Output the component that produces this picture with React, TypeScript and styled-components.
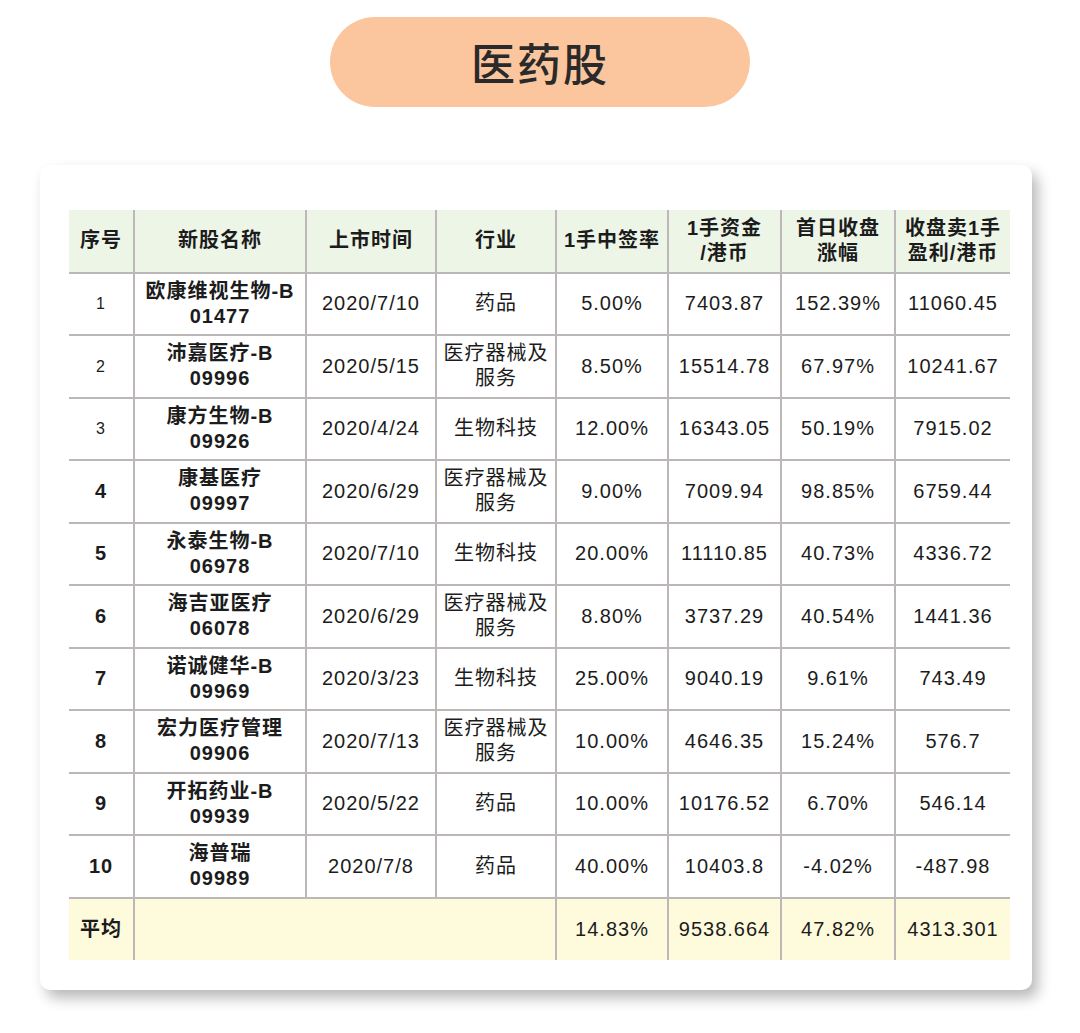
import React from "react"
import styled, { createGlobalStyle } from "styled-components"

const GlobalStyle = createGlobalStyle`
  html, body {
    margin: 0;
    padding: 0;
    background: #ffffff;
  }
  body {
    font-family: "Liberation Sans", "Noto Sans CJK SC", sans-serif;
    color: #1c1c1c;
  }
`

const Page = styled.div`
  width: 1080px;
  height: 1033px;
  padding-top: 17px;
  box-sizing: border-box;
`

const TitlePill = styled.div`
  width: 420px;
  height: 90px;
  margin: 0 auto;
  border-radius: 45px;
  background: #fbc69e;
  display: flex;
  align-items: center;
  justify-content: center;
  font-family: "Noto Sans CJK SC", sans-serif;
  font-size: 44px;
  font-weight: 500;
  letter-spacing: 2px;
  color: #2a2a2a;
`

const Card = styled.div`
  width: 992px;
  margin: 58px 0 0 40px;
  box-sizing: border-box;
  padding: 45px 22px 30px 29px;
  background: #ffffff;
  border-radius: 10px;
  box-shadow: 6px 8px 14px rgba(0, 0, 0, 0.28);
`

const Table = styled.table`
  width: 941px;
  table-layout: fixed;
  border-collapse: collapse;
  font-size: 20px;
`

const Row = styled.tr<{ $tone?: "head" | "avg" }>`
  height: 62.5px;
  background: ${({ $tone }) => ($tone === "head" ? "#edf5e7" : $tone === "avg" ? "#fefadc" : "#ffffff")};
`

const Cell = styled.td<{ $bold?: boolean; $small?: boolean }>`
  padding: 0;
  text-align: center;
  vertical-align: middle;
  line-height: 25px;
  letter-spacing: 1px;
  font-weight: ${({ $bold }) => ($bold ? 700 : 400)};
  font-size: ${({ $small }) => ($small ? "16px" : "20px")};
  border-right: 2px solid #bcb8b8;
  border-bottom: 2px solid #bcb8b8;
  white-space: nowrap;

  &:last-child {
    border-right: none;
  }
  tr:last-child > & {
    border-bottom: none;
  }
`

const HeadCell = styled(Cell).attrs({ as: "th" })`
  font-weight: 700;
  font-size: 20px;
`

const cols = [65, 172, 130, 120, 112, 113, 114, 115]

const headers = ["序号", "新股名称", "上市时间", "行业", "1手中签率", ["1手资金", "/港币"], ["首日收盘", "涨幅"], ["收盘卖1手", "盈利/港币"]]

const rows: [string, string, string, string, string, string, string, string, string][] = [
  ["1", "欧康维视生物-B", "01477", "2020/7/10", "药品", "5.00%", "7403.87", "152.39%", "11060.45"],
  ["2", "沛嘉医疗-B", "09996", "2020/5/15", "医疗器械及服务", "8.50%", "15514.78", "67.97%", "10241.67"],
  ["3", "康方生物-B", "09926", "2020/4/24", "生物科技", "12.00%", "16343.05", "50.19%", "7915.02"],
  ["4", "康基医疗", "09997", "2020/6/29", "医疗器械及服务", "9.00%", "7009.94", "98.85%", "6759.44"],
  ["5", "永泰生物-B", "06978", "2020/7/10", "生物科技", "20.00%", "11110.85", "40.73%", "4336.72"],
  ["6", "海吉亚医疗", "06078", "2020/6/29", "医疗器械及服务", "8.80%", "3737.29", "40.54%", "1441.36"],
  ["7", "诺诚健华-B", "09969", "2020/3/23", "生物科技", "25.00%", "9040.19", "9.61%", "743.49"],
  ["8", "宏力医疗管理", "09906", "2020/7/13", "医疗器械及服务", "10.00%", "4646.35", "15.24%", "576.7"],
  ["9", "开拓药业-B", "09939", "2020/5/22", "药品", "10.00%", "10176.52", "6.70%", "546.14"],
  ["10", "海普瑞", "09989", "2020/7/8", "药品", "40.00%", "10403.8", "-4.02%", "-487.98"],
]

function Industry({ value }: { value: string }) {
  if (value === "医疗器械及服务") {
    return (
      <>
        医疗器械及
        <br />
        服务
      </>
    )
  }
  return <>{value}</>
}

export default function App() {
  return (
    <>
      <GlobalStyle />
      <Page>
        <TitlePill>医药股</TitlePill>
        <Card>
          <Table>
            <colgroup>
              {cols.map((w, i) => (
                <col key={i} style={{ width: w }} />
              ))}
            </colgroup>
            <tbody>
              <Row $tone="head">
                {headers.map((h, i) => (
                  <HeadCell key={i}>
                    {Array.isArray(h) ? (
                      <>
                        {h[0]}
                        <br />
                        {h[1]}
                      </>
                    ) : (
                      h
                    )}
                  </HeadCell>
                ))}
              </Row>
              {rows.map(r => (
                <Row key={r[0]}>
                  <Cell $bold={Number(r[0]) > 3} $small={Number(r[0]) <= 3}>
                    {r[0]}
                  </Cell>
                  <Cell $bold>
                    {r[1]}
                    <br />
                    {r[2]}
                  </Cell>
                  <Cell>{r[3]}</Cell>
                  <Cell>
                    <Industry value={r[4]} />
                  </Cell>
                  <Cell>{r[5]}</Cell>
                  <Cell>{r[6]}</Cell>
                  <Cell>{r[7]}</Cell>
                  <Cell>{r[8]}</Cell>
                </Row>
              ))}
              <Row $tone="avg">
                <HeadCell>平均</HeadCell>
                <Cell colSpan={3} />
                <Cell>14.83%</Cell>
                <Cell>9538.664</Cell>
                <Cell>47.82%</Cell>
                <Cell>4313.301</Cell>
              </Row>
            </tbody>
          </Table>
        </Card>
      </Page>
    </>
  )
}
